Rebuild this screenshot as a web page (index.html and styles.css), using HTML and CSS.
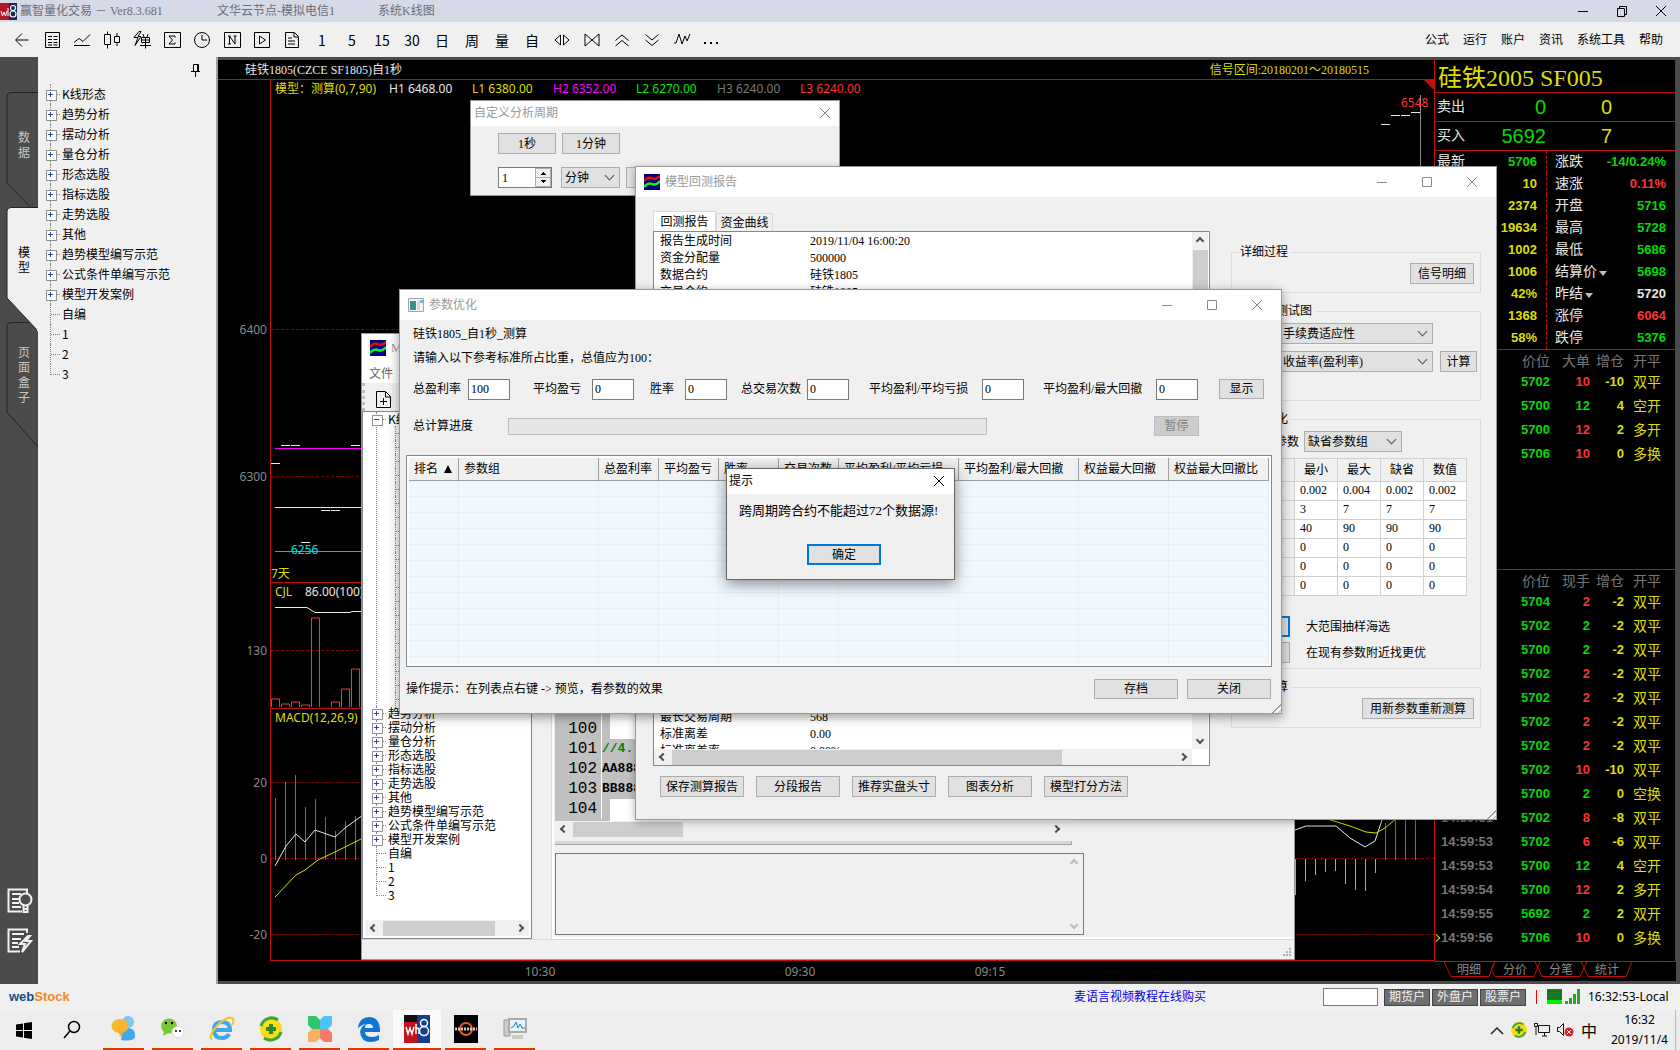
FILE: index.html
```html
<!DOCTYPE html>
<html lang="zh-CN">
<head>
  <meta charset="utf-8">
  <title>赢智量化交易</title>
  <link rel="stylesheet" href="styles.css">
</head>
<body>
<div class="app">

  <header class="app-title">
    <svg class="app-logo" width="17" height="17" viewBox="0 0 17 17"><path fill="#b0182a" d="M0 0h9v17H0z"/><path fill="#14295c" d="M9 0h8v17H9z"/><circle cx="13" cy="5" r="2.5" fill="none" stroke="#fff" stroke-width="1.2"/><circle cx="13" cy="11" r="3" fill="none" stroke="#fff" stroke-width="1.2"/><path d="M1 8l1.5 5 1.5-4 1.5 4 1.5-5M8 5v8" fill="none" stroke="#fff"/></svg>
    <span class="app-name">赢智量化交易 － Ver8.3.681</span>
    <span class="app-node">文华云节点-模拟电信1</span>
    <span>系统K线图</span>
    <div class="win-ctl app-ctl">
      <button aria-label="最小化"><svg width="12" height="12"><path d="M1 6.5h10"/></svg></button>
      <button aria-label="还原"><svg width="12" height="12"><path d="M1.5 3.5h7v8h-7zM3.5 3V1.5h7v8H9"/></svg></button>
      <button aria-label="关闭"><svg width="12" height="12"><path d="M1 1l10 10M11 1L1 11"/></svg></button>
    </div>
  </header>

  <nav class="toolbar">
    <div class="tools">
      <button aria-label="返回"><svg viewBox="0 0 20 20"><path d="M16.5 10H4M10 3.5L3.5 10l6.5 6.5"/></svg></button>
      <button aria-label="报价"><svg viewBox="0 0 20 20"><path d="M3.5 2.5h14v15h-14zM6 6.5h4M11.5 6.5h4M6 9.5h4M11.5 9.5h4M6 12.5h4M11.5 12.5h4M6 15h4M11.5 15h4"/></svg></button>
      <button aria-label="分时"><svg viewBox="0 0 20 20"><path d="M2 12.5l5-4 4 3 7-7M2 15.5h16"/></svg></button>
      <button aria-label="K线"><svg viewBox="0 0 20 20"><path d="M2.5 4.5h6v10h-6zM5.5 1.5v3M5.5 14.5v4M12.5 6.5h5v6h-5zM15 3v3M15 13v3"/></svg></button>
      <button aria-label="闪电下单"><svg viewBox="0 0 20 20"><path d="M7 1.5L2 7.5h4l-3 8 6-9H6l3-5zM9.5 7.5h8v5h-8zM9.5 10h8M13.500 7.5v11M8 15.5h11M11 4l1 3M16 4l-1 3"/></svg></button>
      <button aria-label="统计"><svg viewBox="0 0 20 20"><path d="M2.5 2.5h16v15h-16zM13 7.5V6H7l3.5 4L7 14h6v-1.5"/></svg></button>
      <button aria-label="时间"><svg viewBox="0 0 20 20"><circle cx="10" cy="10" r="7.5"/><path d="M10 5v5h5"/></svg></button>
      <button aria-label="新闻"><svg viewBox="0 0 20 20"><path d="M2.5 2.5h16v15h-16zM6 6h2.5M7.5 14V6l5.5 8V6M6 14h3M11.5 6h3"/></svg></button>
      <button aria-label="播放"><svg viewBox="0 0 20 20"><path d="M2.5 2.5h15v15h-15zM7.5 6v8l6-4z"/></svg></button>
      <button aria-label="文档"><svg viewBox="0 0 20 20"><path d="M3.5 2.5h9l4 4v11h-13zM12 3v4h4M6 8h4M6 11h7M6 14h7"/></svg></button>
      <button>1</button>
      <button>5</button>
      <button>15</button>
      <button>30</button>
      <button>日</button>
      <button>周</button>
      <button>量</button>
      <button>自</button>
      <button aria-label="展开"><svg viewBox="0 0 20 20"><path d="M8.5 5v10L3 10zM11.5 5v10l5.5-5z"/></svg></button>
      <button aria-label="收缩"><svg viewBox="0 0 20 20"><path d="M3 4v12l14-12v12z"/></svg></button>
      <button aria-label="上移"><svg viewBox="0 0 20 20"><path d="M3.5 10.5L10 5l6.5 5.5M3.5 16l6.5-5.5 6.5 5.5"/></svg></button>
      <button aria-label="下移"><svg viewBox="0 0 20 20"><path d="M3.5 4.5L10 10l6.5-5.5M3.5 10l6.5 5.5 6.5-5.5"/></svg></button>
      <button aria-label="指标"><svg viewBox="0 0 20 20"><path d="M2 13h2l3-9 3 10 3-8 2 5 3-7"/></svg></button>
      <button aria-label="更多"><svg viewBox="0 0 20 20"><path d="M2 13h2M8 13h2M14 13h2" stroke-width="2"/></svg></button>
    </div>
    <div class="menus">
      <a href="#">公式</a><a href="#">运行</a><a href="#">账户</a><a href="#">资讯</a><a href="#">系统工具</a><a href="#">帮助</a>
    </div>
  </nav>

  <main class="main">
    <aside class="strip">
      <svg class="strip-shapes" width="38" height="400" viewBox="0 57 38 400">
        <path d="M38 92.5H11q-4 0-4 4V183l31 32" fill="none" stroke="#222"/>
        <path d="M38 322.5H11q-4 0-4 4V412l31 35" fill="none" stroke="#222"/>
        <path d="M38 207.5H11q-4 0-4 4V298l31 33z" fill="#f0f0f0" stroke="#222"/>
        <path d="M38 208v123" stroke="#f0f0f0" stroke-width="2"/>
      </svg>
      <button class="side-tab">数据</button>
      <button class="side-tab on">模型</button>
      <button class="side-tab">页面盒子</button>
      <div class="strip-icons">
        <svg width="26" height="26" viewBox="0 0 26 26"><path d="M20 5V1.5H1.5v22H15M5 6h9M5 11h7M5 15h7M5 19h9"/><circle cx="18.5" cy="11.5" r="6"/><path d="M16.5 18v6h4v-6M16 21h5"/></svg>
        <svg width="26" height="26" viewBox="0 0 26 26"><path d="M20 5V1.5H1.5v22H13M5 6h12M5 11h9M5 15h6M5 19h7M21 8l-8 8h5l-3 8 9-11h-5l4-5z"/></svg>
      </div>
    </aside>

    <aside class="side-tree">
      <svg class="pin" width="9" height="13"><path d="M2.5.5h5v7h-5zM6.5 1v6M0 7.5h9M4.5 8v5"/></svg>
      <ul class="tree">
        <li class="node">K线形态</li>
        <li class="node">趋势分析</li>
        <li class="node">摆动分析</li>
        <li class="node">量仓分析</li>
        <li class="node">形态选股</li>
        <li class="node">指标选股</li>
        <li class="node">走势选股</li>
        <li class="node">其他</li>
        <li class="node">趋势模型编写示范</li>
        <li class="node">公式条件单编写示范</li>
        <li class="node">模型开发案例</li>
        <li>自编</li>
        <li>1</li>
        <li>2</li>
        <li>3</li>
      </ul>
    </aside>

    <section class="chart">
      <div class="chart-title">
        <span>硅铁1805(CZCE SF1805)自1秒</span>
        <span class="yellow">信号区间:20180201～20180515</span>
      </div>
      <svg class="plot" viewBox="218 80 1216 901" preserveAspectRatio="xMinYMin slice">
        <g class="legend">
          <text x="275" y="93" fill="#dede00">模型：测算(0,7,90)</text>
          <text x="389" y="93" fill="#e8e8e8">H1 6468.00</text>
          <text x="472" y="93" fill="#dede00">L1 6380.00</text>
          <text x="553" y="93" fill="#f0f">H2 6352.00</text>
          <text x="636" y="93" fill="#00e600">L2 6270.00</text>
          <text x="717" y="93" fill="#777">H3 6240.00</text>
          <text x="800" y="93" fill="#ff3232">L3 6240.00</text>
        </g>
        <path class="grid" d="M271 329.5H1434M271 476.5H1434M271 650.5H1434M271 782.5H1434M271 858.5H1434M271 934.5H1434"/>
        <path class="frame" d="M270.5 80V960M270 582.5H1434M270 708.5H1434M270 960.5H1434"/>
        <path d="M1424 80h10v10z" fill="#c01008"/>

        <g class="axis">
          <text x="267" y="334">6400</text>
          <text x="267" y="481">6300</text>
          <text x="267" y="655">130</text>
          <text x="267" y="787">20</text>
          <text x="267" y="863">0</text>
          <text x="267" y="939">-20</text>
        </g>
        <g class="times">
          <text x="540" y="976">10:30</text>
          <text x="800" y="976">09:30</text>
          <text x="990" y="976">09:15</text>
        </g>

        <!-- price -->
        <path d="M275 448.5H400" stroke="#f0f"/>
        <path d="M275 551.5H400M1420.5 95V167" stroke="#888"/>
        <path class="white" d="M281 445.5h9M291 445.5h9M351 445.5h9M271 463.5h9M275 507.5H400M321 510.5h9M331 510.5h9M301 542.5h9M1381 124.5h9M1391 115.5h9M1401 115.5h9M1411 112.5h9"/>
        <text x="291" y="554" fill="#00e0e0">6256</text>
        <text x="1401" y="107" fill="#ff3232">6548</text>
        <text x="271" y="578" fill="#dede00">7天</text>

        <!-- volume -->
        <text x="275" y="596" fill="#dede00">CJL</text>
        <text x="305" y="596" fill="#e8e8e8">86.00(100)</text>
        <path class="white" d="M275 607.5h32l8 5h35l2-1h40"/>
        <path class="red" d="M271.5 707v-8h8v8M281.5 707v-3h8v3M291.5 707v-5h8v5M301.5 707v-2h8v2M311.5 707v-89h8v89M331.5 707v-5h8v5M341.5 707v-18h8v18M351.5 707v-38h8v38M361.5 707v-3h8v3"/>

        <!-- macd -->
        <text x="275" y="722" fill="#dede00">MACD(12,26,9)</text>
        <path class="red" d="M275.5 798v62M285.5 782v78M295.5 775v85M305.5 807v53M315.5 799v61M325.5 817v43M335.5 831v29M345.5 821v39M355.5 816v44M1385.5 823v37M1395.5 819v41M1405.5 800v60M1415.5 800v60"/>
        <path d="M1295.5 859v36M1305.5 859v22M1315.5 859v16M1325.5 859v13M1335.5 859v12M1345.5 859v25M1355.5 859v31M1365.5 859v32M1375.5 859v14" stroke="#1ee0e0"/>
        <path class="white" d="M275 866l11-20 10-12 9 8 10-12 20 7 10-9 18-13M1295 830l11-4h30l14 12 15 9 10-6 8-24"/>
        <path d="M275 897l21-22 9-5 13-10 17-8 28-14M1318 816l32 10 16 6 10 1 9-5 12-10" fill="none" stroke="#dede00"/>
      </svg>
    </section>

    <section class="quote">
      <h2>硅铁2005 SF005</h2>
      <div class="bid"><span>卖出</span><b class="green">0</b><b class="yellow">0</b></div>
      <div class="bid"><span>买入</span><b class="green">5692</b><b class="yellow">7</b></div>
      <table class="facts">
        <tr><th>最新</th><td class="green">5706</td><th>涨跌</th><td class="green">-14/0.24%</td></tr>
        <tr><th>现手</th><td class="yellow">10</td><th>速涨</th><td class="red">0.11%</td></tr>
        <tr><th>成交</th><td class="yellow">2374</td><th>开盘</th><td class="green">5716</td></tr>
        <tr><th>持仓</th><td class="yellow">19634</td><th>最高</th><td class="green">5728</td></tr>
        <tr><th>外盘</th><td class="yellow">1002</td><th>最低</th><td class="green">5686</td></tr>
        <tr><th>内盘</th><td class="yellow">1006</td><th>结算价<i class="tri"></i></th><td class="green">5698</td></tr>
        <tr><th>比例</th><td class="yellow">42%</td><th>昨结<i class="tri"></i></th><td class="white">5720</td></tr>
        <tr><th>仓差</th><td class="yellow">1368</td><th>涨停</th><td class="red">6064</td></tr>
        <tr><th>投机</th><td class="yellow">58%</td><th>跌停</th><td class="green">5376</td></tr>
      </table>
      <table class="ticks big">
        <tr><th></th><th>价位</th><th>大单</th><th>增仓</th><th>开平</th></tr>
        <tr><td></td><td>5702</td><td class="red">10</td><td>-10</td><td>双平</td></tr>
        <tr><td></td><td>5700</td><td class="green">12</td><td>4</td><td>空开</td></tr>
        <tr><td></td><td>5700</td><td class="red">12</td><td>2</td><td>多开</td></tr>
        <tr><td></td><td>5706</td><td class="red">10</td><td>0</td><td>多换</td></tr>
      </table>
      <table class="ticks">
        <tr><th></th><th>价位</th><th>现手</th><th>增仓</th><th>开平</th></tr>
        <tr><td></td><td>5704</td><td class="red">2</td><td>-2</td><td>双平</td></tr>
        <tr><td></td><td>5702</td><td class="green">2</td><td>-2</td><td>双平</td></tr>
        <tr><td></td><td>5700</td><td class="green">2</td><td>-2</td><td>双平</td></tr>
        <tr><td></td><td>5702</td><td class="red">2</td><td>-2</td><td>双平</td></tr>
        <tr><td></td><td>5702</td><td class="red">2</td><td>-2</td><td>双平</td></tr>
        <tr><td></td><td>5702</td><td class="red">2</td><td>-2</td><td>双平</td></tr>
        <tr><td></td><td>5702</td><td class="red">2</td><td>-2</td><td>双平</td></tr>
        <tr><td></td><td>5702</td><td class="red">10</td><td>-10</td><td>双平</td></tr>
        <tr><td></td><td>5700</td><td class="green">2</td><td>0</td><td>空换</td></tr>
        <tr><td>14:59:51</td><td>5702</td><td class="red">8</td><td>-8</td><td>双平</td></tr>
        <tr><td>14:59:53</td><td>5702</td><td class="red">6</td><td>-6</td><td>双平</td></tr>
        <tr><td>14:59:53</td><td>5700</td><td class="green">12</td><td>4</td><td>空开</td></tr>
        <tr><td>14:59:54</td><td>5700</td><td class="red">12</td><td>2</td><td>多开</td></tr>
        <tr><td>14:59:55</td><td>5692</td><td class="green">2</td><td>2</td><td>双开</td></tr>
        <tr class="now"><td>14:59:56</td><td>5706</td><td class="red">10</td><td>0</td><td>多换</td></tr>
      </table>
      <div class="quote-tabs">
        <svg width="210" height="17"><path d="M0 .5h10l7 15h38l6-15h180M61 .5l-4 8 4 7h39l6-15M101 .5l7 15h38l7-15M147 .5l7 15h38l6-15"/></svg>
        <a href="#">明细</a><a href="#">分价</a><a href="#">分笔</a><a href="#">统计</a>
      </div>
    </section>
  </main>

  <footer class="status">
    <span class="brand">web<em>Stock</em></span>
    <a class="buy" href="#">麦语言视频教程在线购买</a>
    <input class="code" type="text" aria-label="代码">
    <button>期货户</button>
    <button>外盘户</button>
    <button>股票户</button>
    <i class="bar"></i>
    <svg width="34" height="16"><path fill="#1f7a1f" d="M0 0h15v11H0z"/><path d="M1 2.5h13M1 5.5h13M1 8.5h13" stroke="#063" stroke-dasharray="1 1"/><path fill="#00f000" d="M0 11h15v4H0z"/><path fill="#2aa52a" d="M18 12h3v3h-3zM22 9h3v6h-3zM26 5h3v10h-3zM30 0h3v15h-3z"/></svg>
    <span class="local">16:32:53-Local</span>
  </footer>

  <footer class="taskbar">
    <button class="start" aria-label="开始"><svg width="16" height="17"><path d="M0 2.5l7-1V8H0zM8 1.3L16 0v8H8zM0 9h7v6.5l-7-1zM8 9h8v8l-8-1.2z"/></svg></button>
    <button class="start" aria-label="搜索"><svg width="18" height="20"><circle cx="11" cy="7" r="5.5" fill="none" stroke="#000" stroke-width="1.5"/><path d="M7 11l-6 7" stroke="#000" stroke-width="1.5"/></svg></button>
    <button class="task" aria-label="聊天"><svg width="26" height="28" viewBox="0 0 26 28"><circle cx="17" cy="7" r="6" fill="#7cc8f5"/><path d="M10 25q1-12 8-12 7 1 6 9-2 5-14 3z" fill="#46a6ea"/><ellipse cx="9" cy="11" rx="8.5" ry="7" fill="#f8b62a"/><path d="M8 17l1 5 5-6z" fill="#f8a91c"/></svg></button>
    <button class="task" aria-label="微信"><svg width="26" height="24" viewBox="0 0 26 24"><ellipse cx="9" cy="9" rx="8" ry="7.5" fill="#7bc832"/><path d="M4 14l-1 5 5-3z" fill="#7bc832"/><ellipse cx="18" cy="15" rx="6" ry="5.5" fill="#fff" stroke="#ddd"/><circle cx="6" cy="6" r="1.2"/><circle cx="12" cy="6" r="1.2"/><circle cx="16" cy="14" r="1"/><circle cx="20" cy="14" r="1"/></svg></button>
    <button class="task" aria-label="IE"><svg width="26" height="26" viewBox="0 0 26 26"><path d="M5 14h16q0-8-8-8t-8 8 8 8q5 0 7-4" fill="none" stroke="#3fa9e8" stroke-width="4"/><path d="M3 24Q-1 20 8 10T23 2q3 1 0 7" fill="none" stroke="#f6c426" stroke-width="2"/></svg></button>
    <button class="task" aria-label="安全卫士"><svg width="26" height="26" viewBox="0 0 26 26"><circle cx="13" cy="13" r="11" fill="#f9dc1a"/><path d="M3 10A11 11 0 0 1 20 4M23 16A11 11 0 0 1 6 22" fill="none" stroke="#3da536" stroke-width="3"/><path d="M13 8v10M8 13h10" stroke="#2b8a2b" stroke-width="4"/></svg></button>
    <button class="task" aria-label="软件管家"><svg width="26" height="28" viewBox="0 0 26 28"><path fill="#2fc66e" d="M1 1h8l4 4v9H5l-4-4z"/><path fill="#4cc4fa" d="M25 1h-8l-4 4v9h8l4-4z"/><path fill="#f8b060" d="M1 27h8l4-4v-9H5l-4 4z"/><path fill="#fa7a6a" d="M25 27h-8l-4-4v-9h8l4 4z"/></svg></button>
    <button class="task" aria-label="Edge"><svg width="24" height="26" viewBox="0 0 24 26"><path fill="#0f76d4" d="M1 11Q3 1 12 1q10 0 11 12v3H8q0 5 7 5 4 0 7-2v5q-4 2-8 2-10 0-11-10 1-6 6-8-3 0-8 4zm7 1h8q0-4-4-4t-4 4z"/></svg></button>
    <button class="task on" aria-label="wh8"><svg width="26" height="28" viewBox="0 0 26 28"><path fill="#111" d="M0 0h13v28H0z"/><path fill="#c3141e" d="M0 7h13v21H0z"/><path fill="#15408c" d="M13 0h13v28H13z"/><path d="M2 12l2 7 2-6 2 6 2-7M12 9v10M12 14q3-2 3 1v4" fill="none" stroke="#fff" stroke-width="1.5"/><circle cx="20" cy="8" r="3.5" fill="none" stroke="#fff" stroke-width="1.5"/><circle cx="20" cy="16" r="4.5" fill="none" stroke="#fff" stroke-width="1.5"/></svg></button>
    <button class="task" aria-label="Ryzen"><svg width="24" height="28" viewBox="0 0 24 28"><path d="M0 0h24v28H0z"/><circle cx="12" cy="14" r="6" fill="none" stroke="#e8571c" stroke-width="2"/><path d="M1 14h22" stroke="#ccc" stroke-width="3" stroke-dasharray="2 1"/></svg></button>
    <button class="task" aria-label="任务管理器"><svg width="26" height="24" viewBox="0 0 26 24"><path fill="#ccc" stroke="#999" d="M2 3h6v16H2z"/><path fill="#eaf3fa" stroke="#aaa" stroke-width="2" d="M7 2h17v13H7z"/><path d="M9 11l3-2 2-4 2 6 2-4 2 4h3" fill="none" stroke="#2a7fc0"/><path fill="#ccc" d="M10 18h11v4H10z"/></svg></button>
    <div class="tray">
      <svg width="14" height="9"><path d="M1 8l6-6 6 6" fill="none" stroke="#222" stroke-width="1.5"/></svg>
      <svg width="16" height="16" viewBox="0 0 26 26"><circle cx="13" cy="13" r="13" fill="#f9dc1a"/><path d="M3 10A11 11 0 0 1 20 4M23 16A11 11 0 0 1 6 22" fill="none" stroke="#3da536" stroke-width="3"/><path d="M13 7v12M7 13h12" stroke="#2b7a2b" stroke-width="4"/></svg>
      <svg width="16" height="14"><path d="M4.5 2.5h11v7h-11zM.5.5h3v3h-3zM2 4v8M8 13h5M10.5 10v3" fill="none" stroke="#111"/></svg>
      <svg width="17" height="14"><path d="M.5 4.5h2l4-4v12l-4-4h-2z" fill="none" stroke="#111"/><circle cx="12" cy="9" r="4.5" fill="#d92032"/><path d="M10 7l4 4M14 7l-4 4" stroke="#fff"/></svg>
      <span class="ime">中</span>
      <div class="clock">16:32<br>2019/11/4</div>
    </div>
  </footer>

  <!-- custom period -->
  <section class="window win-period">
    <div class="title"><span>自定义分析周期</span>
      <div class="win-ctl"><button aria-label="关闭"><svg width="12" height="12"><path d="M1 1l10 10M11 1L1 11"/></svg></button></div>
    </div>
    <div class="period-row">
      <button class="btn">1秒</button>
      <button class="btn">1分钟</button>
    </div>
    <div class="period-row">
      <span class="spin"><input type="text" value="1" aria-label="周期数"><i></i></span>
      <span class="drop"><select aria-label="周期单位"><option>分钟</option></select></span>
      <button class="btn" aria-label="确定"></button>
    </div>
  </section>

  <!-- model editor -->
  <section class="window win-editor">
    <div class="title">
      <svg class="wave" width="16" height="16"><path fill="#000080" d="M0 0h16v16H0z"/><path d="M0 7q4-5 8-3t8-2" fill="none" stroke="#f00" stroke-width="2.5"/><path d="M0 13q4-5 8-3t8-3" fill="none" stroke="#0f0" stroke-width="2.5"/></svg>
      <span>M</span>
    </div>
    <div class="menu"><a href="#">文件</a></div>
    <div class="ed-tools">
      <button aria-label="新建"><svg width="15" height="17"><path d="M.5.5h9l5 5v11H.5zM9.5 1v5h5M4 10.5h7M7.5 7v7" fill="none" stroke="#000"/></svg></button>
    </div>
    <div class="ed-body">
      <div class="ed-tree">
        <ul class="tree small">
          <li class="node open">K线
            <ul><li></li><li></li><li></li><li></li><li></li><li></li><li></li><li></li><li></li><li></li><li></li><li></li><li></li><li></li><li></li><li></li><li></li><li></li><li></li><li></li></ul>
          </li>
          <li class="node">趋势分析</li>
          <li class="node">摆动分析</li>
          <li class="node">量仓分析</li>
          <li class="node">形态选股</li>
          <li class="node">指标选股</li>
          <li class="node">走势选股</li>
          <li class="node">其他</li>
          <li class="node">趋势模型编写示范</li>
          <li class="node">公式条件单编写示范</li>
          <li class="node">模型开发案例</li>
          <li>自编</li>
          <li>1</li>
          <li>2</li>
          <li>3</li>
        </ul>
        <div class="hscroll"><i class="arr left"></i><b class="thumb"></b><i class="arr right"></i></div>
      </div>
      <div class="ed-main">
        <div class="code-view">
          <div class="line"><span>99</span><code></code></div>
          <div class="line"><span>100</span><code></code></div>
          <div class="line sel"><span>101</span><code class="rem">//4.</code></div>
          <div class="line sel"><span>102</span><code>AA888</code></div>
          <div class="line sel"><span>103</span><code>BB888</code></div>
          <div class="line"><span>104</span><code></code></div>
        </div>
        <div class="hscroll"><i class="arr left"></i><b class="thumb"></b><i class="arr right"></i></div>
        <div class="splitter"></div>
        <div class="output"><textarea aria-label="输出" readonly></textarea><div class="vscroll off"><i class="arr up"></i><i class="arr down"></i></div></div>
      </div>
    </div>
    <div class="ed-status"><svg width="9" height="9"><path d="M6 0h2v2H6zM3 3h2v2H3zM6 3h2v2H6zM0 6h2v2H0zM3 6h2v2H3zM6 6h2v2H6z" fill="#b0b0b0"/></svg></div>
  </section>

  <!-- back-test report -->
  <section class="window win-report">
    <div class="title">
      <svg class="wave" width="16" height="16"><path fill="#000080" d="M0 0h16v16H0z"/><path d="M0 7q4-5 8-3t8-2" fill="none" stroke="#f00" stroke-width="2.5"/><path d="M0 13q4-5 8-3t8-3" fill="none" stroke="#0f0" stroke-width="2.5"/></svg>
      <span>模型回测报告</span>
      <div class="win-ctl">
        <button aria-label="最小化"><svg width="12" height="12"><path d="M1 6.5h10"/></svg></button>
        <button aria-label="最大化"><svg width="12" height="12"><path d="M1.5 1.5h9v9h-9z"/></svg></button>
        <button aria-label="关闭"><svg width="12" height="12"><path d="M1 1l10 10M11 1L1 11"/></svg></button>
      </div>
    </div>
    <div class="report-body">
      <div class="report-left">
        <div class="tabs"><button class="tab on">回测报告</button><button class="tab">资金曲线</button></div>
        <div class="report-list">
          <div class="report-view">
            <dl>
              <dt>报告生成时间</dt><dd>2019/11/04 16:00:20</dd>
              <dt>资金分配量</dt><dd>500000</dd>
              <dt>数据合约</dt><dd>硅铁1805</dd>
              <dt>交易合约</dt><dd>硅铁1805</dd>
            </dl>
            <dl>
              <dt>最长交易周期</dt><dd>568</dd>
              <dt>标准离差</dt><dd>0.00</dd>
              <dt>标准离差率</dt><dd>0.00%</dd>
            </dl>
          </div>
          <div class="vscroll"><i class="arr up"></i><b class="thumb"></b><i class="arr down"></i></div>
          <div class="hscroll"><i class="arr left"></i><b class="thumb"></b><i class="arr right"></i></div>
        </div>
        <div class="report-btns">
          <button class="btn">保存测算报告</button>
          <button class="btn">分段报告</button>
          <button class="btn">推荐实盘头寸</button>
          <button class="btn">图表分析</button>
          <button class="btn">模型打分方法</button>
        </div>
      </div>
      <div class="report-right">
        <fieldset class="g-detail"><legend>详细过程</legend><button class="btn">信号明细</button></fieldset>
        <fieldset class="g-chart"><legend>多维度测试图</legend>
          <span class="drop"><select aria-label="测试图"><option>手续费适应性</option></select></span>
          <span class="drop"><select aria-label="指标"><option>收益率(盈利率)</option></select></span>
          <button class="btn">计算</button>
        </fieldset>
        <fieldset class="g-opt"><legend>参数优化</legend>
          <div class="opt-row"><label for="pset">选择参数</label><span class="drop"><select id="pset"><option>缺省参数组</option></select></span></div>
          <table>
            <tr><th>名称</th><th>最小</th><th>最大</th><th>缺省</th><th>数值</th></tr>
            <tr><th></th><td>0.002</td><td>0.004</td><td>0.002</td><td>0.002</td></tr>
            <tr><th></th><td>3</td><td>7</td><td>7</td><td>7</td></tr>
            <tr><th></th><td>40</td><td>90</td><td>90</td><td>90</td></tr>
            <tr><th></th><td>0</td><td>0</td><td>0</td><td>0</td></tr>
            <tr><th></th><td>0</td><td>0</td><td>0</td><td>0</td></tr>
            <tr><th></th><td>0</td><td>0</td><td>0</td><td>0</td></tr>
          </table>
          <div class="opt-run"><button class="btn focus" aria-label="海选"></button><span>大范围抽样海选</span></div>
          <div class="opt-run"><button class="btn" aria-label="找优"></button><span>在现有参数附近找更优</span></div>
        </fieldset>
        <fieldset class="g-detail"><legend>重新测算</legend><button class="btn">用新参数重新测算</button></fieldset>
      </div>
    </div>
    <i class="grip"></i>
  </section>

  <!-- parameter optimisation -->
  <section class="window win-param">
    <div class="title">
      <svg width="16" height="14"><path fill="#f4f4f4" stroke="#9aa6b2" d="M.5.5h15v13H.5z"/><path fill="#3f8f88" d="M2 3h6v9H2z"/><path fill="#cfd8dc" d="M9 3h3v9H9z"/><path fill="#7fb0e0" d="M12 2h3v3h-3z"/></svg>
      <span>参数优化</span>
      <div class="win-ctl">
        <button aria-label="最小化"><svg width="12" height="12"><path d="M1 6.5h10"/></svg></button>
        <button aria-label="最大化"><svg width="12" height="12"><path d="M1.5 1.5h9v9h-9z"/></svg></button>
        <button aria-label="关闭"><svg width="12" height="12"><path d="M1 1l10 10M11 1L1 11"/></svg></button>
      </div>
    </div>
    <div class="param-body">
      <p>硅铁1805_自1秒_测算</p>
      <p>请输入以下参考标准所占比重，总值应为100：</p>
      <div class="weights">
        <label for="w1">总盈利率</label><input id="w1" type="text" value="100">
        <label for="w2">平均盈亏</label><input id="w2" type="text" value="0">
        <label for="w3">胜率</label><input id="w3" type="text" value="0">
        <label for="w4">总交易次数</label><input id="w4" type="text" value="0">
        <label for="w5">平均盈利/平均亏损</label><input id="w5" type="text" value="0">
        <label for="w6">平均盈利/最大回撤</label><input id="w6" type="text" value="0">
        <button class="btn">显示</button>
      </div>
      <div class="progress"><span>总计算进度</span><div class="track"></div><button class="btn" disabled>暂停</button></div>
    </div>
    <div class="result">
      <table>
        <colgroup><col class="c50"><col class="c140"><col class="c60"><col class="c60"><col class="c60"><col class="c60"><col class="c120"><col class="c120"><col class="c90"><col class="c100"></colgroup>
        <thead><tr><th>排名 <i class="sort"></i></th><th>参数组</th><th>总盈利率</th><th>平均盈亏</th><th>胜率</th><th>交易次数</th><th>平均盈利/平均亏损</th><th>平均盈利/最大回撤</th><th>权益最大回撤</th><th>权益最大回撤比</th></tr></thead>
        <tbody><tr><td></td><td></td><td></td><td></td><td></td><td></td><td></td><td></td><td></td><td></td></tr></tbody>
      </table>
    </div>
    <div class="param-foot">
      <span>操作提示：在列表点右键 -&gt; 预览，看参数的效果</span>
      <button class="btn">存档</button>
      <button class="btn">关闭</button>
    </div>
    <i class="grip"></i>
  </section>

  <!-- message box -->
  <section class="window win-msg">
    <div class="title"><span>提示</span>
      <div class="win-ctl"><button aria-label="关闭"><svg width="12" height="12"><path d="M1 1l10 10M11 1L1 11"/></svg></button></div>
    </div>
    <p>跨周期跨合约不能超过72个数据源!</p>
    <button class="btn focus">确定</button>
  </section>
</div>
</body>
</html>
```

FILE: styles.css
```css
* {
  box-sizing: border-box;
}

body {
  margin: 0;
  font-family: "Liberation Serif", "Noto Sans CJK SC", serif;
  font-size: 12px;
  line-height: 16px;
  color: #000;
  background: #f0f0f0;
}

button,
input,
select,
textarea {
  font: inherit;
  color: inherit;
  margin: 0;
  padding: 0;
  border-radius: 0;
}

button {
  background: none;
  border: none;
  white-space: nowrap;
}

a {
  color: inherit;
  text-decoration: none;
}

ul, dl, p, h2 {
  margin: 0;
  padding: 0;
  list-style: none;
}

.app {
  position: relative;
  display: flex;
  flex-direction: column;
  height: 100vh;
  overflow: hidden;
}

.green { color: #00dc00; }
.yellow { color: #dede00; }
.red { color: #ff3232; }
.white { color: #e8e8e8; }

/* title bar */
.app-title {
  display: flex;
  align-items: center;
  flex: none;
  height: 22px;
  background: #d6d9e7;
  color: #6d6d74;
}

.app-name { width: 200px; padding-left: 3px; }
.app-node { width: 161px; }

.win-ctl {
  display: flex;
  margin-left: auto;
}

.win-ctl button {
  width: 45px;
  height: 20px;
}

.win-ctl svg {
  display: block;
  margin: auto;
  fill: none;
  stroke: #8a8a8a;
}

.app-ctl button { width: 39px; }
.app-ctl svg { stroke: #000; }

/* toolbar */
.toolbar {
  display: flex;
  justify-content: space-between;
  align-items: center;
  flex: none;
  height: 35px;
  padding: 0 17px 0 7px;
}

.tools { display: flex; }

.tools button {
  width: 30px;
  height: 24px;
  font: 14px/24px "Noto Sans CJK SC", sans-serif;
}

.tools svg {
  display: block;
  width: 20px;
  height: 20px;
  margin: auto;
  fill: none;
  stroke: #000;
}

.menus { display: flex; gap: 14px; }

.main {
  display: grid;
  grid-template-columns: 38px 180px 1fr 246px;
  flex: 1;
  min-height: 0;
}

/* left strip */
.strip {
  position: relative;
  display: flex;
  flex-direction: column;
  background: #4b4b4b;
}

.strip-shapes {
  position: absolute;
  left: 0;
  top: 0;
}

.side-tab {
  position: relative;
  height: 115px;
  padding: 0 12px 0 18px;
  color: #c8c8c8;
  line-height: 15px;
  white-space: normal;
}

.side-tab:first-of-type { margin-top: 31px; }
.side-tab.on { color: #000; }

.strip-icons {
  display: flex;
  flex-direction: column;
  gap: 14px;
  margin: auto 0 30px 7px;
}

.strip-icons svg {
  fill: none;
  stroke: #f0f0f0;
  stroke-width: 2;
}

/* trees */
.side-tree {
  border-right: 2px solid #a0a0a0;
}

.pin {
  display: block;
  margin: 7px 0 7px 153px;
  fill: none;
  stroke: #000;
}

.tree {
  margin-left: 12px;
}

.tree li {
  position: relative;
  padding-left: 12px;
  line-height: 20px;
  white-space: nowrap;
  font-family: "Noto Sans CJK SC", sans-serif;
}

.tree li::before {
  content: "";
  position: absolute;
  left: 0;
  top: 0;
  width: 9px;
  height: 20px;
  border-left: 1px dotted #888;
  background: linear-gradient(90deg, #888 50%, transparent 0) 0 10px / 2px 1px repeat-x;
}

.tree > li:last-child::before { height: 11px; }

/* boxed plus sign, open nodes lose the upright stroke */
.tree .node::after {
  content: "";
  position: absolute;
  left: -4px;
  top: 6px;
  width: 9px;
  height: 9px;
  border: 1px solid #919191;
  background:
    linear-gradient(#2b4a9c, #2b4a9c) 1px 3px / 5px 1px no-repeat,
    linear-gradient(#2b4a9c, #2b4a9c) 3px 1px / 1px 5px no-repeat #fff;
}

.tree .open::after {
  background: linear-gradient(#2b4a9c, #2b4a9c) 1px 3px / 5px 1px no-repeat #fff;
}

.tree.small { margin: 0 0 0 13px; }

.tree.small li {
  line-height: 14px;
  min-height: 14px;
}

.tree.small li::before {
  height: 100%;
  background-position: 0 7px;
}

.tree.small > li:last-child::before { height: 8px; }
.tree.small .node::after { top: 3px; }
.tree.small ul { margin-left: 7px; }

/* chart */
.chart {
  display: flex;
  flex-direction: column;
  min-width: 0;
  min-height: 0;
  background: #000;
  border-top: 3px solid #4b4b4b;
  border-bottom: 3px solid #4b4b4b;
}

.chart-title {
  display: flex;
  justify-content: space-between;
  flex: none;
  height: 20px;
  padding: 2px 65px 0 27px;
  color: #e8e8e8;
  border-bottom: 1px solid #c01008;
}

.plot {
  flex: 1;
  width: 100%;
  min-height: 0;
  font-family: "Noto Sans", "Noto Sans CJK SC", sans-serif;
  font-size: 12px;
}

.plot .grid { stroke: #8c0000; stroke-dasharray: 3 2; }
.plot .frame { stroke: #c01008; }
.plot .white { stroke: #e8e8e8; fill: none; }
.plot .red { stroke: #ff3232; fill: none; }
.plot .axis { fill: #888; text-anchor: end; }
.plot .times { fill: #888; text-anchor: middle; }

/* quote panel */
.quote {
  background: #000;
  color: #e8e8e8;
  border: solid #4b4b4b;
  border-width: 3px 4px 3px 0;
  font-size: 14px;
}

.quote h2,
.bid,
.facts,
.ticks {
  border: solid #c01008;
  border-width: 0 1px 1px 1px;
}

.quote h2 {
  height: 33px;
  padding-left: 3px;
  color: #dede00;
  font-weight: normal;
  font-size: 24px;
  line-height: 36px;
}

.bid {
  display: grid;
  grid-template-columns: 50px 59px 1fr;
  align-items: center;
  height: 29px;
  padding-left: 2px;
}

.bid b {
  font: 20px/28px "Liberation Sans", sans-serif;
  text-align: right;
}

.bid .yellow { padding-right: 63px; }

.quote table {
  width: 100%;
  table-layout: fixed;
  border-collapse: separate;
  border-spacing: 0;
}

.quote th,
.quote td {
  height: 22px;
  padding: 0;
  line-height: 22px;
  white-space: nowrap;
}

.quote th {
  font-weight: normal;
  text-align: left;
}

.quote td {
  font-family: "Liberation Sans", "Noto Sans CJK SC", sans-serif;
  font-size: 13px;
  font-weight: bold;
  text-align: right;
}

.facts { height: 199px; }
.facts th:first-child { width: 50px; }
.quote .facts th:first-child { padding-left: 2px; }
.quote .facts td:nth-child(2) { width: 62px; padding-right: 9px; border-right: 1px dashed #c01008; }
.quote .facts th:nth-child(3) { width: 56px; padding-left: 8px; }
.quote .facts td:last-child { padding-right: 9px; }

.tri {
  display: inline-block;
  margin-left: 2px;
  border: 4px solid transparent;
  border-top: 5px solid #c0c0c0;
  border-bottom: 0;
}

.quote .ticks {
  display: block;
  height: 392px;
}

.quote .ticks.big { height: 220px; }

.quote .ticks td {
  height: 24px;
  line-height: 24px;
}

.quote .ticks th {
  height: 20px;
  padding-top: 4px;
  line-height: 16px;
  color: #777;
  text-align: right;
}

.ticks th:nth-child(1) { width: 63px; }
.ticks th:nth-child(2) { width: 52px; }
.ticks th:nth-child(3) { width: 40px; }
.ticks th:nth-child(4) { width: 34px; }

.quote .ticks th:nth-child(5) {
  width: 50px;
  padding-left: 9px;
  text-align: left;
}

.ticks td:nth-child(1) { color: #777; }
.quote .ticks td:nth-child(1) { padding-left: 6px; text-align: left; }
.ticks td:nth-child(2) { color: #00dc00; }
.ticks td:nth-child(4) { color: #dede00; }

.quote .ticks td:nth-child(5) {
  color: #dede00;
  font-size: 14px;
  font-weight: normal;
  text-align: left;
  padding-left: 9px;
}

.now td:first-child { position: relative; }

.now td:first-child::before {
  content: "";
  position: absolute;
  left: -2px;
  top: 9px;
  width: 5px;
  height: 5px;
  border: solid #dede00;
  border-width: 1px 1px 0 0;
  transform: rotate(45deg);
}

.quote-tabs {
  position: relative;
  display: flex;
  gap: 22px;
  padding-left: 23px;
  color: #888;
  font-size: 12px;
}

.quote-tabs svg {
  position: absolute;
  left: 0;
  top: -1px;
  fill: none;
  stroke: #c01008;
}

/* status bar */
.status {
  display: flex;
  align-items: center;
  flex: none;
  height: 26px;
  padding-right: 10px;
}

.brand {
  margin-left: 9px;
  color: #144a8c;
  font: bold 13px/20px "Liberation Sans", sans-serif;
}

.brand em { font-style: normal; color: #f5871f; }

.buy {
  margin: 0 117px 0 auto;
  color: #0000e6;
}

.code {
  width: 55px;
  height: 18px;
  margin-right: 6px;
  border: 1px solid #7a7a7a;
}

.status button {
  width: 46px;
  height: 17px;
  margin-right: 2px;
  border: 1px solid #444;
  background: #6e6e6e;
  color: #f0f0f0;
  line-height: 14px;
}

.status .bar {
  width: 1px;
  height: 14px;
  margin: 0 10px 0 8px;
  background: #f00;
}

.local {
  margin-left: 7px;
  font-family: "Noto Sans", sans-serif;
  width: 82px;
}

/* taskbar */
.taskbar {
  display: flex;
  flex: none;
  height: 40px;
  background: #ededed;
}

.taskbar .start { width: 48px; }

.task {
  width: 41px;
  margin-left: 8px;
  border-bottom: 2px solid #da3b01;
}

.task:nth-of-type(3) { margin-left: 7px; }
.task.on { background: #fafafa; width: 48px; margin-left: 4px; }
.task.on + .task { margin-left: 4px; }
.taskbar svg { display: block; margin: auto; }

.tray {
  display: flex;
  align-items: center;
  gap: 7px;
  margin-left: auto;
  margin-right: 4px;
}

.ime { font: 16px/20px "Noto Sans CJK SC", sans-serif; }

.clock {
  width: 72px;
  border-right: 1px solid #bbb;
  font: 12px/20px "Noto Sans", sans-serif;
  text-align: center;
}

/* windows */
.window {
  position: absolute;
  display: flex;
  flex-direction: column;
  background: #f0f0f0;
  border: 1px solid #999;
}

.title {
  display: flex;
  align-items: center;
  flex: none;
  height: 30px;
  padding: 0 2px 1px 8px;
  background: #fff;
  color: #999;
}

.title svg { flex: none; }
.title > span { margin-left: 5px; }

.btn {
  height: 21px;
  border: 1px solid #adadad;
  background: #e1e1e1;
  line-height: 18px;
}

.btn.focus { border: 2px solid #0078d7; line-height: 16px; }
.btn:disabled { border-color: #bfbfbf; background: #ccc; color: #838383; }

.drop {
  position: relative;
  display: block;
}

.drop select {
  appearance: none;
  width: 100%;
  height: 21px;
  padding-left: 3px;
  border: 1px solid #adadad;
  background: #e1e1e1;
}

.drop::after {
  content: "";
  position: absolute;
  right: 7px;
  top: 5px;
  width: 6px;
  height: 6px;
  border: solid #555;
  border-width: 0 1px 1px 0;
  transform: rotate(45deg);
}

.grip {
  position: absolute;
  right: 0;
  bottom: 0;
  width: 11px;
  height: 11px;
  background: repeating-linear-gradient(135deg, #fff 0 1px, #a0a0a0 1px 2px, #f0f0f0 2px 4px);
  clip-path: polygon(100% 0, 100% 100%, 0 100%);
}

.hscroll,
.vscroll {
  display: flex;
  align-items: center;
  background: #f0f0f0;
}

.hscroll { height: 16px; }
.vscroll { flex-direction: column; width: 16px; }
.thumb { background: #cdcdcd; }
.hscroll .thumb { height: 15px; }
.vscroll .thumb { width: 15px; }

.arr {
  width: 6px;
  height: 6px;
  margin: 6px;
  border: solid #505050;
  border-width: 2px 2px 0 0;
}

.arr.up { transform: rotate(-45deg); }
.arr.right { transform: rotate(45deg); margin-left: auto; }
.arr.down { transform: rotate(135deg); margin-top: auto; }
.arr.left { transform: rotate(-135deg); }
.off .arr { border-color: #bbb; }

/* custom period */
.win-period {
  left: 470px;
  top: 100px;
  width: 370px;
  height: 96px;
}

.win-period .title { height: 25px; padding: 0 0 2px; }
.win-period .title > span { margin-left: 3px; }
.win-period .win-ctl button { width: 29px; }

.period-row {
  display: flex;
  gap: 6px;
  padding: 7px 0 6px 27px;
}

.period-row .btn { width: 58px; }
.period-row .drop { width: 59px; margin-left: 3px; }

.spin {
  display: flex;
  width: 54px;
  height: 21px;
  border: 1px solid #7a7a7a;
  background: #fff;
}

.spin input {
  width: 36px;
  padding-left: 3px;
  border: none;
}

.spin i {
  flex: 1;
  border: 1px solid #adadad;
  background:
    linear-gradient(#000, #000) 5px 5px / 5px 1px no-repeat,
    linear-gradient(#000, #000) 6px 4px / 3px 1px no-repeat,
    linear-gradient(#000, #000) 7px 3px / 1px 1px no-repeat,
    linear-gradient(#000, #000) 5px 11px / 5px 1px no-repeat,
    linear-gradient(#000, #000) 6px 12px / 3px 1px no-repeat,
    linear-gradient(#000, #000) 7px 13px / 1px 1px no-repeat,
    linear-gradient(#adadad, #adadad) 0 8px / 100% 1px no-repeat #f0f0f0;
}

/* model editor */
.win-editor {
  left: 361px;
  top: 333px;
  width: 934px;
  height: 627px;
}

.win-editor .title { height: 28px; padding-bottom: 0; }

.menu {
  height: 21px;
  padding: 4px 7px 0;
  background: #fff;
  color: #666;
}

.ed-tools {
  height: 28px;
  padding: 8px 0 0 11px;
  border-left: 3px dotted #bbb;
}

.ed-body {
  display: flex;
  flex: 1;
  min-height: 0;
}

.ed-tree {
  display: flex;
  flex-direction: column;
  flex: none;
  width: 170px;
  margin-right: 19px;
  padding-bottom: 2px;
  border: 1px solid #828790;
  background: #fff;
}

.ed-tree .hscroll { margin: auto 2px 0; }
.ed-tree .thumb { width: 112px; }

.ed-main {
  display: flex;
  flex-direction: column;
  flex: 1;
  min-width: 0;
  padding-left: 3px;
  border-left: 1px solid #d8d8d8;
  box-shadow: inset 2px 0 #fff, inset 0 -2px #fff;
}

.code-view {
  display: flex;
  flex-direction: column;
  justify-content: flex-end;
  flex: 1;
  width: 518px;
  padding-bottom: 2px;
  background: linear-gradient(90deg, #c0c0c0 55px, #fff 0);
  overflow: hidden;
  font: 16px/20px "Liberation Mono", monospace;
}

.line { display: flex; flex: none; height: 20px; }
.line.sel { background: #c0c0c0; }

.line span {
  width: 47px;
  padding-right: 4px;
  border-right: 1px solid #fff;
  text-align: right;
}

.line code { font: bold 13px/20px "Liberation Mono", monospace; }
.line .rem { color: #008000; }

.ed-main > .hscroll { width: 510px; }
.ed-main > .hscroll .thumb { width: 110px; }

.splitter {
  width: 517px;
  height: 4px;
  margin-top: 4px;
  border: solid #a0a8a8;
  border-width: 0 1px 1px 0;
  background: #d0d8d8;
}

.output {
  display: flex;
  width: 529px;
  height: 82px;
  margin: 8px 0 4px;
  border: 1px solid #7a7a7a;
  background: #f0f0f0;
}

.output textarea {
  flex: 1;
  border: none;
  background: none;
  resize: none;
}

.output .vscroll { width: 18px; }

.ed-status {
  display: flex;
  justify-content: flex-end;
  align-items: flex-end;
  height: 20px;
  padding: 0 2px 2px;
  border-top: 1px solid #d8d8d8;
}

/* back-test report */
.win-report {
  left: 635px;
  top: 166px;
  width: 862px;
  height: 654px;
  box-shadow: 0 2px 8px rgba(0, 0, 0, .3);
}

.report-body {
  display: flex;
  gap: 21px;
  padding: 14px 15px 0 17px;
}

.report-left { flex: 1; }

.tabs {
  display: flex;
  align-items: flex-end;
  height: 20px;
}

.tab {
  width: 57px;
  height: 18px;
  border: 1px solid #d9d9d9;
  border-bottom: none;
}

.tab.on {
  width: 63px;
  height: 20px;
  background: #fff;
}

.report-list {
  display: grid;
  grid-template-columns: 1fr 17px;
  grid-template-rows: 517px 16px;
  border: 1px solid #828790;
  background: #fff;
}

.report-view {
  display: flex;
  flex-direction: column;
  justify-content: space-between;
  overflow: hidden;
  padding: 1px 0 0 6px;
}

.report-view dl {
  display: grid;
  grid-template-columns: 150px 1fr;
  grid-auto-rows: 17px;
  line-height: 17px;
}

.report-view dl:last-child { height: 40px; flex: none; }
.report-view dd { margin: 0; }
.report-list .vscroll .thumb { height: 400px; }
.report-list .hscroll .thumb { width: 390px; }

.report-btns {
  display: flex;
  gap: 12px;
  padding: 10px 7px;
}

.report-btns .btn { width: 84px; }

.report-right {
  display: flex;
  flex-direction: column;
  gap: 10px;
  width: 250px;
  padding-top: 33px;
}

fieldset {
  margin: 0;
  padding: 4px 6px 0 7px;
  border: 1px solid #dcdcdc;
}

legend { padding: 0 3px 0 1px; }

.g-detail { height: 49px; padding-top: 3px; }

.g-detail .btn {
  display: block;
  margin-left: auto;
  padding: 0 7px;
}

.g-chart {
  display: grid;
  grid-template-columns: 154px 37px;
  justify-content: end;
  gap: 7px;
  height: 98px;
  padding-right: 3px;
}

.g-chart .drop:nth-of-type(1) { grid-row: 1; }
.g-chart .drop:nth-of-type(2) { grid-row: 2; }
.g-chart .btn { grid-row: 2; grid-column: 2; }

.g-opt { height: 258px; }

.opt-row {
  display: flex;
  align-items: center;
  gap: 5px;
  padding-left: 12px;
}

.opt-row .drop { width: 98px; }

.g-opt table {
  width: 228px;
  margin: 6px 0 20px;
  table-layout: fixed;
  border-collapse: collapse;
}

.g-opt th,
.g-opt td {
  height: 19px;
  padding: 0 0 2px 5px;
  border: 1px solid #d0d0d0;
  line-height: 15px;
}

.g-opt th { padding: 0; font-weight: normal; }
.g-opt tr:first-child th { height: 23px; }
.g-opt th:first-child { width: 55px; }
.g-opt td { background: #fff; }

.opt-run {
  display: flex;
  align-items: center;
  gap: 16px;
  margin-bottom: 5px;
}

.opt-run .btn { width: 51px; }

/* parameter optimisation */
.win-param {
  left: 399px;
  top: 289px;
  width: 883px;
  height: 425px;
  box-shadow: 0 3px 10px rgba(0, 0, 0, .4);
}

.param-body { padding: 6px 13px 0; }

.param-body p { height: 24px; }

.weights {
  display: grid;
  grid-template-columns: 55px 65px 59px 58px 35px 56px 66px 62px 113px 61px 113px 63px 45px;
  align-items: center;
  height: 22px;
  margin-top: 4px;
  white-space: nowrap;
}

.weights input {
  width: 42px;
  height: 21px;
  padding-left: 2px;
  border: 1px solid #7a7a7a;
  background: #fff;
}

.weights .btn,
.progress .btn { width: 45px; height: 20px; }

.progress {
  display: flex;
  align-items: center;
  margin: 16px 0 19px;
}

.progress span { width: 95px; }

.track {
  width: 479px;
  height: 17px;
  border: 1px solid #bcbcbc;
  background: #e6e6e6;
}

.progress .btn { margin-left: 167px; }

.result {
  flex: none;
  margin: 0 9px 0 6px;
  border: 1px solid #828790;
  padding: 2px;
  background: #fff;
}

.result table {
  width: 860px;
  table-layout: fixed;
  border-collapse: separate;
  border-spacing: 0;
}

.c50 { width: 50px; }
.c60 { width: 60px; }
.c90 { width: 90px; }
.c100 { width: 100px; }
.c120 { width: 120px; }
.c140 { width: 140px; }

.result th {
  height: 23px;
  padding: 0 0 0 5px;
  border-right: 1px solid #a0a0a0;
  border-bottom: 1px solid #a0a0a0;
  background: #f0f0f0;
  font-weight: normal;
  text-align: left;
  white-space: nowrap;
  line-height: 16px;
}

.sort {
  display: inline-block;
  margin-left: 3px;
  border: 4px solid transparent;
  border-top: 0;
  border-bottom: 8px solid #000;
}

.result td {
  height: 183px;
  border-right: 1px solid #eee;
  background: repeating-linear-gradient(#f0f8ff 0 15px, #eee 15px 16px);
}

.param-foot {
  display: flex;
  align-items: center;
  gap: 9px;
  padding: 12px 10px 0 6px;
}

.param-foot span { margin-right: auto; }
.param-foot .btn { width: 84px; height: 20px; }

/* message box */
.win-msg {
  left: 726px;
  top: 468px;
  width: 229px;
  height: 112px;
  border-color: #666;
  box-shadow: 0 4px 14px rgba(0, 0, 0, .45);
}

.win-msg .title {
  height: 25px;
  padding: 0 0 2px;
  color: #000;
}

.win-msg .title > span { margin-left: 2px; }
.win-msg .win-ctl button { width: 30px; }
.win-msg .win-ctl svg { stroke: #000; }

.win-msg p {
  padding: 9px 12px 25px;
  font-size: 13px;
}

.win-msg .btn {
  width: 74px;
  margin-left: 80px;
}
```
